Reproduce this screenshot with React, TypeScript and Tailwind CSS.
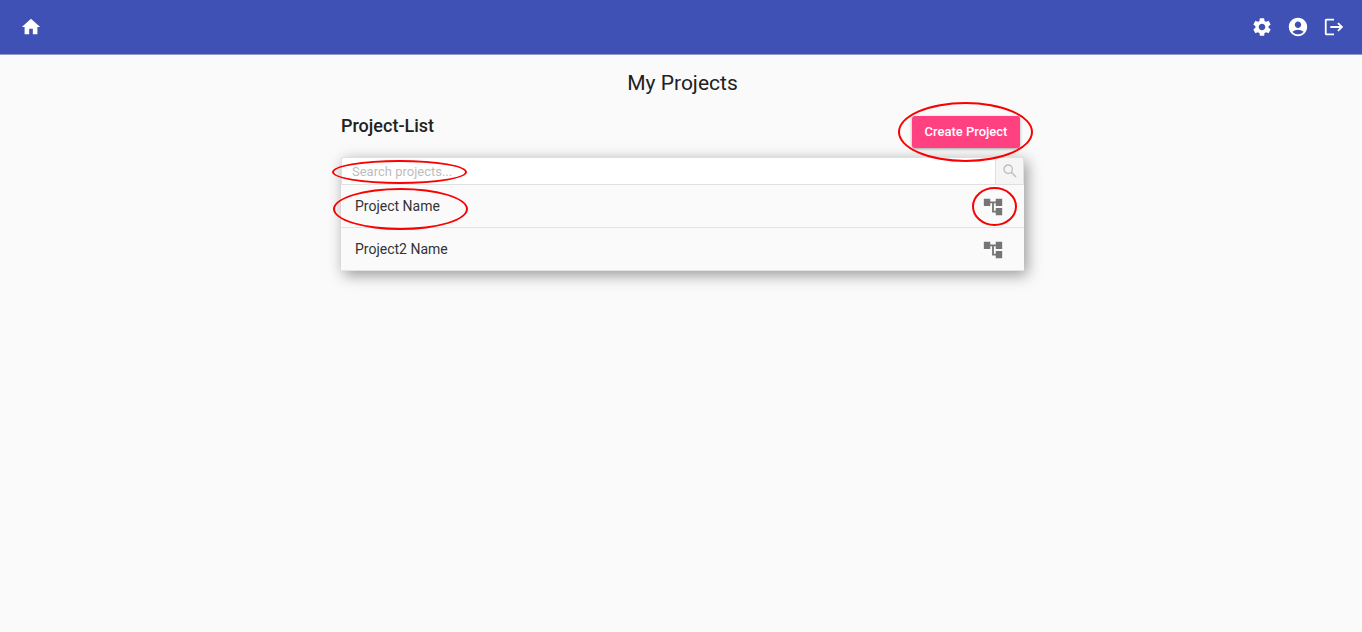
import type { ReactNode } from "react";
import {
  MdAccountCircle,
  MdAccountTree,
  MdHome,
  MdLogout,
  MdSettings,
} from "react-icons/md";

const projects = [
  { name: "Project Name", highlighted: true },
  { name: "Project2 Name", highlighted: false },
];

function Ring({ className }: { className: string }) {
  return (
    <span
      aria-hidden="true"
      className={`pointer-events-none absolute z-10 rounded-[50%] border-2 border-[#fa0000] ${className}`}
    />
  );
}

function NavLink({ label, children }: { label: string; children: ReactNode }) {
  return (
    <a href="#" aria-label={label} className="block text-[22px] text-white">
      {children}
    </a>
  );
}

function SearchIcon() {
  return (
    <svg
      aria-hidden="true"
      viewBox="0 0 14 14"
      className="size-3.5"
      fill="none"
      stroke="currentColor"
    >
      <circle cx="5.2" cy="5.2" r="4.2" strokeWidth="1.3" />
      <path d="M8.3 8.3 13 13" strokeWidth="1.5" />
    </svg>
  );
}

export default function App() {
  return (
    <div className="min-h-screen bg-[#fafafa] font-[Roboto,sans-serif] text-[#212121]">
      <header className="flex h-[55px] items-center justify-between border-b border-[#8f99d3] bg-[#3f51b5] pr-[17px] pl-5">
        <NavLink label="Home">
          <MdHome />
        </NavLink>
        <nav className="flex items-center gap-3.5">
          <NavLink label="Settings">
            <MdSettings />
          </NavLink>
          <NavLink label="Account">
            <MdAccountCircle />
          </NavLink>
          <NavLink label="Log out">
            <MdLogout />
          </NavLink>
        </nav>
      </header>

      <main className="pt-[13px] pl-[3px]">
        <h1 className="text-center text-[21px] leading-[30px]">My Projects</h1>

        <section className="mx-auto mt-[18px] w-full max-w-[683px]">
          <div className="flex h-[41px] items-start justify-between pr-1">
            <h2 className="text-[18px] leading-5 font-medium">Project-List</h2>
            <div className="relative">
              <button
                type="button"
                className="block h-8 w-[108px] rounded-[3px] bg-[#ff4081] text-[13px] font-medium whitespace-nowrap text-white shadow-[0_1px_3px_rgba(0,0,0,0.35)]"
              >
                Create Project
              </button>
              <Ring className="-top-3.5 -left-3.5 h-[60px] w-[135px]" />
            </div>
          </div>

          <div className="shadow-[3px_4px_14px_rgba(0,0,0,0.4)]">
            <form role="search" className="flex h-7 border border-[#e0e0e0]">
              <div className="relative flex-1 bg-white">
                <input
                  type="text"
                  aria-label="Search projects"
                  placeholder="Search projects..."
                  className="block h-full w-full bg-transparent px-2.5 text-[13px] outline-none placeholder:text-[#bdbdbd]"
                />
                <Ring className="top-0.5 -left-2.5 h-6 w-[135px]" />
              </div>
              <button
                type="button"
                aria-label="Search"
                className="flex w-7 items-center justify-center border-l border-[#e0e0e0] bg-[#f5f5f5] text-[#bdbdbd]"
              >
                <SearchIcon />
              </button>
            </form>

            <ul className="bg-[#fafafa]">
              {projects.map((project) => (
                <li
                  key={project.name}
                  className="flex h-[43px] items-center justify-between border-b border-[#e4e4e4] pr-5 pl-3.5 text-[#333333]"
                >
                  <span className="relative text-[14px] leading-5">
                    {project.name}
                    {project.highlighted && (
                      <Ring className="-top-2 -left-[22px] h-[42px] w-[135px]" />
                    )}
                  </span>
                  <button
                    type="button"
                    aria-label={`Open ${project.name}`}
                    className="relative pt-0.5 text-[22px] text-[#757575]"
                  >
                    <MdAccountTree />
                    {project.highlighted && (
                      <Ring className="-top-[7px] -left-2.5 h-[39px] w-[45px]" />
                    )}
                  </button>
                </li>
              ))}
            </ul>
          </div>
        </section>
      </main>
    </div>
  );
}
